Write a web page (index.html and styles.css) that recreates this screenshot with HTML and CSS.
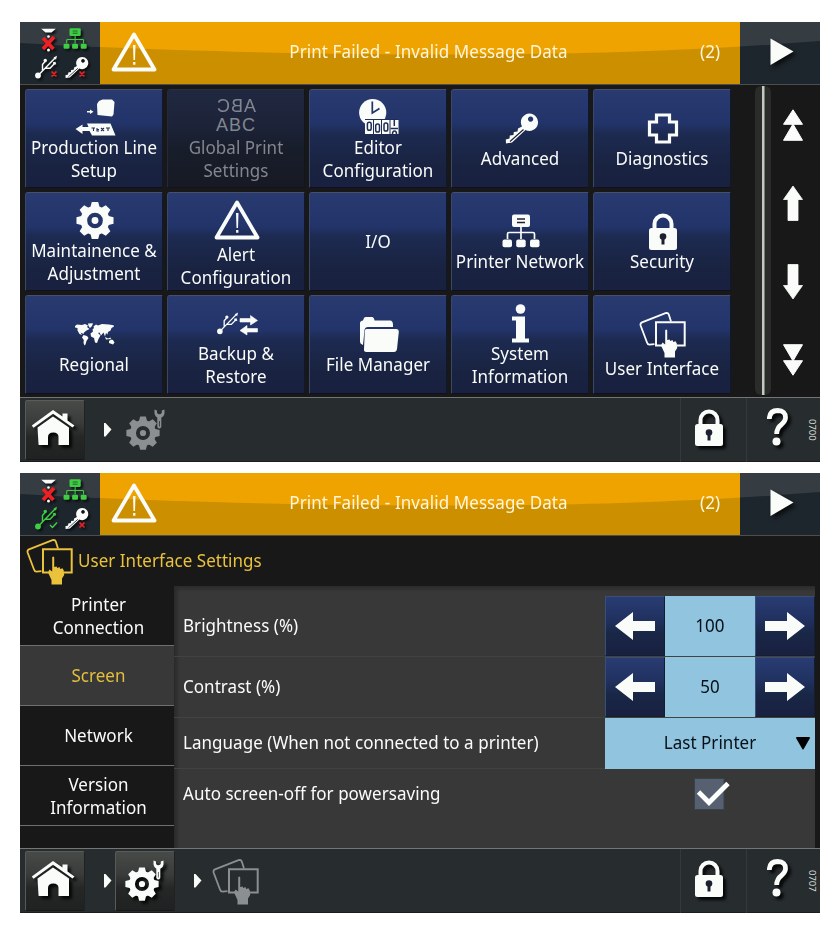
FILE: index.html
```html
<!DOCTYPE html>
<html lang="en">
<head>
<meta charset="utf-8">
<title>Printer Controller</title>
<link rel="stylesheet" href="styles.css">
</head>
<body>
<svg class="defs" width="0" height="0">
  <defs>
    <symbol id="gloss" viewBox="0 0 800 62" preserveAspectRatio="none">
      <path d="M0 0H800V19C710 26 600 32.500 440 32.500C270 32.500 120 28 0 21Z"/>
    </symbol>
    <symbol id="warn" viewBox="0 0 48 48"><path d="M25 6.500L45.500 41.500H4.500Z" fill="none" stroke="currentColor" stroke-width="3.800" stroke-linejoin="round"/><path d="M24 17H26.500L26 32H24.500Z M24.100 34H26.400V36.700H24.100Z"/></symbol>
    <symbol id="network" viewBox="0 0 48 40"><rect x="16" y="3.500" width="18" height="12.500" rx="2"/><path d="M21 8H29M21 11.500H29" stroke="var(--hole)" stroke-width="1.300"/><path d="M25 16V28M11.500 28V23Q11.500 21.500 13 21.500H37Q38.500 21.500 38.500 23V28" fill="none" stroke="currentColor" stroke-width="1.700"/><rect x="6.500" y="28.500" width="9.500" height="7.800" rx="2"/><rect x="20.200" y="28.500" width="9.500" height="7.800" rx="2"/><rect x="34" y="28.500" width="9.500" height="7.800" rx="2"/></symbol>
    <symbol id="key" viewBox="0 0 48 40"><path fill-rule="evenodd" d="M33.500 5.500A8.700 8.700 0 1 1 29.500 22L16 34.500L10 35.500L9.800 31.500L13.500 30.500L13.800 27.500L17.500 27L17.800 24L21.500 23.500L22 20.500L26 18.500A8.700 8.700 0 0 1 33.500 5.500ZM34.600 8.500A2.600 2.600 0 1 0 34.610 8.500Z"/><path d="M14 33.500L27.500 21.500" stroke="var(--hole)" stroke-width="1.100"/></symbol>
    <symbol id="usb" viewBox="0 0 24 24"><circle cx="3" cy="20.500" r="2.900"/><path d="M3 20.500L20 3M7.500 16V9.500L10 6.500M10.500 13.200H15L19 9" fill="none" stroke="currentColor" stroke-width="1.400"/><path d="M18.500 2.500L22 .8L21 4.800Z"/><circle cx="10.300" cy="5.500" r="1.700"/><path d="M17.800 7.200L20.500 6.700L21.200 9.300L18.500 10Z"/></symbol>
    <symbol id="nozzle" viewBox="0 0 16 24"><path d="M.5 0H15.500L11 4H5Z"/><circle cx="8" cy="8" r="1.300"/><circle cx="8" cy="21.500" r="1.500"/><path d="M2.500 9.500L13 20.500M13.500 8.500L2.500 20.500" stroke="#ed2024" stroke-width="3.800"/></symbol>
    <symbol id="gear" viewBox="-20 -20 40 40">
      <mask id="gearhole" maskUnits="userSpaceOnUse" x="-20" y="-20" width="40" height="40"><rect x="-20" y="-20" width="40" height="40" fill="#fff"/><circle r="5.800" fill="none" stroke="#000" stroke-width="4.500"/></mask>
      <g mask="url(#gearhole)"><circle r="14.800"/><path id="t" d="M-4.800 -13L-3.300 -19H3.300L4.800 -13V13L3.300 19H-3.300L-4.800 13Z"/><use href="#t" transform="rotate(45)"/><use href="#t" transform="rotate(90)"/><use href="#t" transform="rotate(135)"/></g>
    </symbol>
    <symbol id="gearset" viewBox="0 0 40 42"><use href="#gear" x="-.5" y="6.500" width="35" height="35"/><path d="M28.500 .5V4.500Q29.200 8 31.300 8.800V18Q33.300 21 35.300 18V8.800Q38.200 7.500 38.500 4.500V.5L35.800 1.500V4Q33.300 6.500 31 4V1.500Z"/><path d="M33.400 12V17.500" stroke="#000" stroke-opacity=".6" stroke-width="1"/></symbol>
    <symbol id="lock" viewBox="0 0 48 40"><path d="M14.500 17V13A10.500 10.500 0 0 1 35.500 13V17H31.500V13A6.500 6.500 0 0 0 18.500 13V17Z"/><rect x="11" y="17" width="28" height="22" rx="2.500"/><circle cx="25" cy="25.500" r="3.300" fill="var(--hole)"/><path d="M23.500 26H26.500V33.500H23.500Z" fill="var(--hole)"/></symbol>
    <symbol id="touch" viewBox="0 0 50 48"><path d="M17.500 34.200L12.500 34.600Q10.500 34.500 10 32.500L3.600 15.500Q3 13.400 5 12.300L28.500 3.200Q31 2.400 31.800 4.500L34 11.500" fill="none" stroke="currentColor" stroke-width="1.800"/><path d="M25.500 35.500H19V12.200H47.700V35.500H40" fill="none" stroke="currentColor" stroke-width="2"/><path d="M28.200 20.200Q29.300 18.800 30.200 20.200V30L32.600 29.500L33.300 31L35.500 30L36.200 32L38.500 31.200L39.800 33.500L40.200 38L38 41.500V47.500H27.500V43L24 35.500L25.500 32.500L28.200 34.500Z"/></symbol>
    <symbol id="home" viewBox="0 0 44 38"><path d="M.8 16.500L22 1L31.500 7.500V4.500H36.500V11.500L43.500 16.500L41.500 18.500L22 4.700L2.500 18.800Z"/><path d="M6.500 18.500L22 7.500L38 18.500V36H27.500V28Q27.500 23.500 22.300 23.500Q17 23.500 17 28V36H8Q7.500 36 7.500 35Z"/></symbol>
    <symbol id="single" viewBox="0 0 20 36"><path d="M10 1L19.500 14.500H15V35.500H5V14.500H.5Z" stroke="currentColor" stroke-width=".8" stroke-linejoin="round"/></symbol>
    <symbol id="double" viewBox="0 0 20 32"><path d="M10 .8L19.500 15.300H.5ZM10 15L19.500 31.300H.5Z" stroke="currentColor" stroke-linejoin="round"/></symbol>
    <symbol id="bar" viewBox="0 0 40 28"><path d="M0 14L18 0V9H40V19H18V28Z"/></symbol>
    <symbol id="crumb" viewBox="0 0 8 14"><path d="M0 0L1.500 0L7.500 6.500L1.500 13.500H0Z"/></symbol>
    <symbol id="help" viewBox="0 0 22 38"><path d="M2.300 11Q2.500 2.500 10.700 2.500Q18.800 2.700 18.500 10Q18.300 13.300 14.500 16.500Q9.700 20 9.700 26" fill="none" stroke="currentColor" stroke-width="4.800"/><circle cx="9.500" cy="33.500" r="4"/></symbol>
  </defs>
</svg>

<main class="screens">
  <section class="panel">
    <header class="top">
      <div class="status">
        <svg class="shine"><use href="#gloss"/></svg>
        <svg class="states" viewBox="0 0 80 62"><use href="#nozzle" x="20.500" y="6.500" width="16" height="24"/><use class="green" href="#network" x="39.500" y="4" width="30" height="25"/><use href="#usb" x="15" y="33" width="24" height="24"/><use href="#key" x="38.500" y="31" width="34" height="28.300"/><path d="M31.500 49.500L36.500 54.500M36.500 49.500L31.500 54.500M59.500 49.500L64.500 54.500M64.500 49.500L59.500 54.500" stroke="#ed2024" stroke-width="1.700"/></svg>
      </div>
      <div class="alert">
        <svg class="shine"><use href="#gloss"/></svg>
        <svg class="warning"><use href="#warn"/></svg>
        <span class="message t">Print Failed - Invalid Message Data</span><span class="count t">(2)</span>
      </div>
      <div class="play"><svg class="shine"><use href="#gloss"/></svg><svg class="playicon" viewBox="0 0 24 28"><path d="M.5 .5L23.500 13.500L.5 27Z"/></svg></div>
    </header>

    <div class="menu">
      <div class="tiles">
        <div class="tile"><svg class="ico" viewBox="0 0 48 40"><path d="M29 4L32.500 2.500H42L44.500 5L43.500 17.500L42 19.500L27.500 18L27 7Z"/><path d="M17 14H20V12.500L23.500 14.800L20 17V15.500H17Z"/><path d="M17 26.500H40.500L45.500 38.500H22L19.500 34H12.500V37L5.500 32L12.500 27.500V30H18.500Z"/><path d="M21.500 31H25M23.500 31V34M27 31V34H29M27 32.500H29M31 31L34 34M34 31L31 34M36 31H40M38 31V34" stroke="#202d55" stroke-width="1.100" fill="none"/></svg><span class="t">Production Line<br>Setup</span></div>
        <div class="tile off"><span class="abc"><b>ABC</b><b>ABC</b></span><span class="t">Global Print<br>Settings</span></div>
        <div class="tile"><svg class="ico" viewBox="0 0 48 40"><circle cx="18.700" cy="15.500" r="13.600"/><path d="M18.300 4.500V16L25.500 11.500" fill="none" stroke="#22326a" stroke-width="1.700"/><path d="M11 23H44.500V37H11Z"/><path d="M11 22.500H44.500M19.500 23V37M27.500 23V37M36 23V37" stroke="#202d55"/><g fill="none" stroke="#202d55" stroke-width="1.500"><rect x="13.400" y="25.300" width="3.800" height="8" rx="1.800"/><rect x="21.700" y="27" width="3.800" height="8" rx="1.800"/><rect x="30" y="26" width="3.800" height="8" rx="1.800"/><path d="M40.300 23V29M36.500 31.500H44M38.500 37Q38.500 34 40.500 34Q42.500 34 42.500 37"/></g></svg><span class="t">Editor<br>Configuration</span></div>
        <div class="tile"><svg class="ico"><use href="#key"/></svg><span class="t">Advanced</span></div>
        <div class="tile"><svg class="ico" viewBox="0 0 48 40"><path d="M18.500 7H31.500V14H38.500V27H31.500V34H18.500V27H11.500V14H18.500Z" fill="none" stroke="currentColor" stroke-width="3.200"/></svg><span class="t">Diagnostics</span></div>

        <div class="tile"><svg class="ico"><use href="#gear" x="5.500" y="1" width="39" height="39"/></svg><span class="t">Maintainence &amp;<br>Adjustment</span></div>
        <div class="tile"><svg class="ico tall"><use href="#warn"/></svg><span class="t">Alert<br>Configuration</span></div>
        <div class="tile"><span class="t">I/O</span></div>
        <div class="tile"><svg class="ico"><use href="#network"/></svg><span class="t">Printer Network</span></div>
        <div class="tile"><svg class="ico"><use href="#lock"/></svg><span class="t">Security</span></div>

        <div class="tile"><svg class="ico" viewBox="0 0 48 40"><path d="M5 12L7 10.500L12 11L15 10L18 11.500L17 13L19.500 15L16.500 16.500L14 18.500L13.500 20L10.500 18.500L12 21L13.500 21.500L9.500 20L7.500 16.500V14L5 13.500ZM18 9.500L23 9.200L22 12L20 14L18.500 12ZM13.500 21L17 22L18.500 24L16.500 27L15.500 30.500L14.500 31.500L13.500 29L13.800 26L12 23.500ZM22.500 15.500L24 14L23.500 12.500L26 10.500L28 11.500L32 10L39 10.500L43.500 11.300L44 12.500L41.500 14L40.500 16.500L38 18L37.500 20.500L36 19L35 22.500L33.500 18.500L31 21.500L29.500 18.500L28 19L30.500 21.500L28.500 25L27 29L25 28.500L24 24L21 22.500L20.500 19.500L23 17.500ZM35 23L38 24.500L40.500 23.500L41 25L36 25.500ZM39 27L41 25.500L43 26L44.500 28.500L43 30.500L39 29Z"/></svg><span class="t">Regional</span></div>
        <div class="tile"><svg class="ico" viewBox="0 0 48 40"><use href="#usb" x="5" y="8.500" width="23" height="23.500"/><path d="M28 15.500H38.500V12.500L45.500 17.500L38.500 22V19H28ZM45.500 25.500H35V22.500L28 27.500L35 32V29H45.500Z" stroke="currentColor" stroke-width=".6"/></svg><span class="t">Backup &amp;<br>Restore</span></div>
        <div class="tile"><svg class="ico" viewBox="0 0 48 40"><path d="M6 28V9Q6 7 9 6.500L10 4Q10.500 3 12 3H18Q20 3 20.500 6.500H36Q39 6.500 39 11V13H14Q11 13 10.500 16L9 31Q6 30 6 28Z"/><path d="M12.500 15H42Q45 15 44.800 18L43 35Q42.500 38 40 38H12.500Q9.500 38 10 35L10.800 17Q11 15 12.500 15Z"/></svg><span class="t">File Manager</span></div>
        <div class="tile"><svg class="ico" viewBox="0 0 48 40"><circle cx="24.500" cy="6" r="4.800"/><path d="M16 13.500H29V35.500H33V39.500H16V35.500H20V17.500H16Z"/></svg><span class="t">System<br>Information</span></div>
        <div class="tile"><svg class="ico tall wide"><use href="#touch"/></svg><span class="t">User Interface</span></div>
      </div>
      <div class="track"><i></i></div>
      <nav class="pager">
        <svg width="20" height="32"><use href="#double"/></svg>
        <svg width="20" height="36"><use href="#single"/></svg>
        <svg class="flip" width="20" height="36"><use href="#single"/></svg>
        <svg class="flip" width="20" height="32"><use href="#double"/></svg>
      </nav>
    </div>

    <footer class="bottom">
      <div class="btn house"><svg width="44" height="38"><use href="#home"/></svg></div>
      <svg class="crumb" width="8" height="14"><use href="#crumb"/></svg>
      <div class="here tools"><svg width="40" height="42"><use href="#gearset"/></svg></div>
      <div class="cell lockcell"><svg width="48" height="40"><use href="#lock"/></svg></div>
      <div class="cell helpcell"><svg width="22" height="38"><use href="#help"/></svg><span class="code">0700</span></div>
    </footer>
  </section>

  <section class="panel">
    <header class="top">
      <div class="status">
        <svg class="shine"><use href="#gloss"/></svg>
        <svg class="states" viewBox="0 0 80 62"><use href="#nozzle" x="20.500" y="6.500" width="16" height="24"/><use class="green" href="#network" x="39.500" y="4" width="30" height="25"/><use class="green" href="#usb" x="15" y="33" width="24" height="24"/><use href="#key" x="38.500" y="31" width="34" height="28.300"/><path d="M59.500 49.500L64.500 54.500M64.500 49.500L59.500 54.500" stroke="#ed2024" stroke-width="1.700"/><path d="M30 52L32.500 54.500L37 49.500" fill="none" stroke="#41d14a" stroke-width="1.300"/></svg>
      </div>
      <div class="alert">
        <svg class="shine"><use href="#gloss"/></svg>
        <svg class="warning"><use href="#warn"/></svg>
        <span class="message t">Print Failed - Invalid Message Data</span><span class="count t">(2)</span>
      </div>
      <div class="play"><svg class="shine"><use href="#gloss"/></svg><svg class="playicon" viewBox="0 0 24 28"><path d="M.5 .5L23.500 13.500L.5 27Z"/></svg></div>
    </header>

    <div class="title"><svg width="50" height="48"><use href="#touch"/></svg><span class="t">User Interface Settings</span></div>
    <div class="settings">
      <nav class="tabs">
        <div class="tab"><span class="t">Printer<br>Connection</span></div>
        <div class="tab active"><span class="t">Screen</span></div>
        <div class="tab"><span class="t">Network</span></div>
        <div class="tab"><span class="t">Version<br>Information</span></div>
      </nav>
      <div class="form">
        <div class="row"><span class="t">Brightness (%)</span><div class="stepper"><div class="step"><svg width="40" height="28"><use href="#bar"/></svg></div><div class="value"><span class="t">100</span></div><div class="step"><svg class="turn" width="40" height="28"><use href="#bar"/></svg></div></div></div>
        <div class="row"><span class="t">Contrast (%)</span><div class="stepper"><div class="step"><svg width="40" height="28"><use href="#bar"/></svg></div><div class="value"><span class="t">50</span></div><div class="step"><svg class="turn" width="40" height="28"><use href="#bar"/></svg></div></div></div>
        <div class="row short"><span class="t">Language (When not connected to a printer)</span><div class="select"><span class="t">Last Printer</span><svg width="14" height="13" viewBox="0 0 14 13"><path d="M0 1Q0 0 1 0H13Q14 0 14 1L7.700 12Q7 13 6.300 12Z"/></svg></div></div>
        <div class="row short last"><span class="t">Auto screen-off for powersaving</span><div class="checkwrap"><svg width="36" height="32" viewBox="0 0 36 32"><rect x=".500" y=".500" width="29.500" height="31" fill="#566070" stroke="#35434b"/><path d="M4.500 14L15 24.500L34 5.500" fill="none" stroke="#fff" stroke-width="4.800"/></svg></div></div>
      </div>
    </div>

    <footer class="bottom">
      <div class="btn house"><svg width="44" height="38"><use href="#home"/></svg></div>
      <svg class="crumb" width="8" height="14"><use href="#crumb"/></svg>
      <div class="btn"><svg width="40" height="42"><use href="#gearset"/></svg></div>
      <svg class="crumb" width="8" height="14"><use href="#crumb"/></svg>
      <div class="here"><svg width="50" height="48"><use href="#touch"/></svg></div>
      <div class="cell lockcell"><svg width="48" height="40"><use href="#lock"/></svg></div>
      <div class="cell helpcell"><svg width="22" height="38"><use href="#help"/></svg><span class="code">0707</span></div>
    </footer>
  </section>
</main>
</body>
</html>
```
FILE: styles.css
```css
* { box-sizing: border-box; }
body { margin: 0; background: #fff; color: #fafcfa; font: 17px/22px "Noto Sans", "Open Sans", sans-serif; --hole: #1d2030; }
svg { display: block; fill: currentColor; overflow: visible; flex: none; }
.defs { position: absolute; }
.t { display: inline-block; white-space: nowrap; letter-spacing: .04px; transform: scaleY(1.06); }
.screens { display: flex; flex-direction: column; gap: 11px; padding: 22px 20px 0; }
.panel { width: 800px; height: 440px; background: #181818; display: flex; flex-direction: column; overflow: hidden; }

.top { height: 63px; flex: none; display: flex; border-bottom: 1px solid #4c4d4c; }
.status, .alert, .play { position: relative; overflow: hidden; display: flex; align-items: center; }
.status, .play { width: 80px; background: #1e262d; }
.alert { width: 640px; background: #cb8f00; }
.shine { position: absolute; top: 0; left: 0; width: 800px; height: 62px; }
.status .shine, .play .shine { color: #353d43; }
.alert .shine { left: -80px; color: #efa300; }
.play .shine { left: -720px; }
.states { position: relative; width: 80px; height: 62px; filter: drop-shadow(2px 2px 1px #0b0e10); }
.green { color: #3fce43; --hole: #174e28; }
.warning { position: relative; width: 48px; height: 48px; margin-left: 9px; margin-top: -2px; }
.message { flex: 1; text-align: center; margin-top: -2px; letter-spacing: .09px; color: #fff6dc; }
.count { width: 24px; margin: -2px 16px 0 0; color: #fff6dc; }
.playicon { position: relative; width: 24px; height: 28px; margin: -2px 0 0 30px; filter: drop-shadow(3px 3px 2px #0a0d10); }

.menu { height: 312px; flex: none; display: flex; }
.tiles { width: 735px; display: grid; grid-template-columns: repeat(5, 138px); grid-template-rows: repeat(3, 99px); gap: 4px; padding: 4px 0 0 5px; }
.tile { display: flex; flex-direction: column; align-items: center; justify-content: center; text-align: center; border: 1px solid; border-color: #46506c #10182e #0d1222 #39476b; border-radius: 3px 1px 1px 1px; background: linear-gradient(#283a70, #22346a 34%, #1d2a51 45%, #192341 78%, #192040); }
.ico { width: 48px; height: 40px; }
.ico.tall { height: 48px; }
.ico.wide { width: 50px; }
.off { color: #83868f; border-color: #292f3d #11151e #10131b #232938; background: linear-gradient(#202841, #1c2338 38%, #181d2b 60%, #171a24); }
.abc { height: 40px; display: flex; flex-direction: column; align-items: center; font: 18px/20px "Liberation Sans", sans-serif; letter-spacing: 1px; }
.abc b { font-weight: normal; margin-top: -1px; height: 20px; }
.abc b:first-child { transform: scaleX(-1); }
.track { width: 16px; margin: 1px 0 2px; border-radius: 6px; background: #292c28; display: flex; justify-content: center; }
.track i { width: 3px; background: #c5c9c3; border-right: 1px solid #777b75; }
.pager { width: 49px; padding: 24px 0 21px 12px; display: flex; flex-direction: column; justify-content: space-between; }
.flip { transform: scaleY(-1); }
.turn { transform: scaleX(-1); }

.bottom { height: 65px; flex: none; display: flex; align-items: center; padding-left: 5px; border-top: 1px solid #737674; border-bottom: 1px solid #1b1e20; background: #272c2f; }
.btn { width: 60px; height: 60px; display: flex; align-items: center; justify-content: center; border: 1px solid; border-color: #5a5c5a #202221 #171918 #585a58; border-radius: 2px; background: linear-gradient(#484a48, #3a3c3b 38%, #252726 62%, #202221); }
.house { padding: 0 4px 4px 0; }
.btn svg, .cell svg { filter: drop-shadow(3px 3px 1.5px #050606); }
.crumb { margin: 0 3px 0 19px; }
.here { margin-left: 5px; color: #8b8f91; }
.tools { margin-left: 11px; }
.cell { height: 64px; display: flex; align-items: center; border-left: 1px solid #34393c; }
.lockcell { width: 66px; margin-left: auto; padding: 0 0 6px 3px; }
.helpcell { width: 74px; padding-left: 20px; }
.helpcell svg { margin: -6px 16px 0 0; }
.code { writing-mode: vertical-rl; font-size: 9.5px; line-height: 14px; color: #d5d8d5; }

.title { height: 50px; flex: none; display: flex; align-items: center; gap: 4px; padding-left: 4px; color: #eac23c; }
.settings { height: 262px; flex: none; display: flex; }
.tabs { width: 154px; flex: none; }
.tab { height: 60px; display: flex; align-items: center; justify-content: center; text-align: center; padding-left: 3px; border-bottom: 1px solid #6e706e; }
.tab.active { background: #383838; color: #e3bf3c; }
.form { width: 641px; padding-top: 10px; background: linear-gradient(#2a2a2a, transparent 6px), linear-gradient(90deg, #292929, #383838 6px); }
.row { height: 61px; display: flex; align-items: center; justify-content: space-between; padding-left: 9px; border-bottom: 1px solid #424242; }
.row.short { height: 51px; }
.row.last { height: 50px; border: 0; }
.stepper { width: 210px; height: 60px; display: flex; }
.step { width: 60px; display: flex; align-items: center; justify-content: center; border: 1px solid; border-color: #3a4e73 #151d31 #151d31 #35507a; background: linear-gradient(#293c73, #20315f 40%, #192747 62%, #192040); }
.value, .select { background: #90c4df; color: #071016; display: flex; align-items: center; justify-content: center; }
.value { width: 90px; }
.select { position: relative; width: 210px; height: 51px; }
.select svg { position: absolute; right: 5px; color: #000; }
.checkwrap { width: 210px; padding-left: 89px; }
```
